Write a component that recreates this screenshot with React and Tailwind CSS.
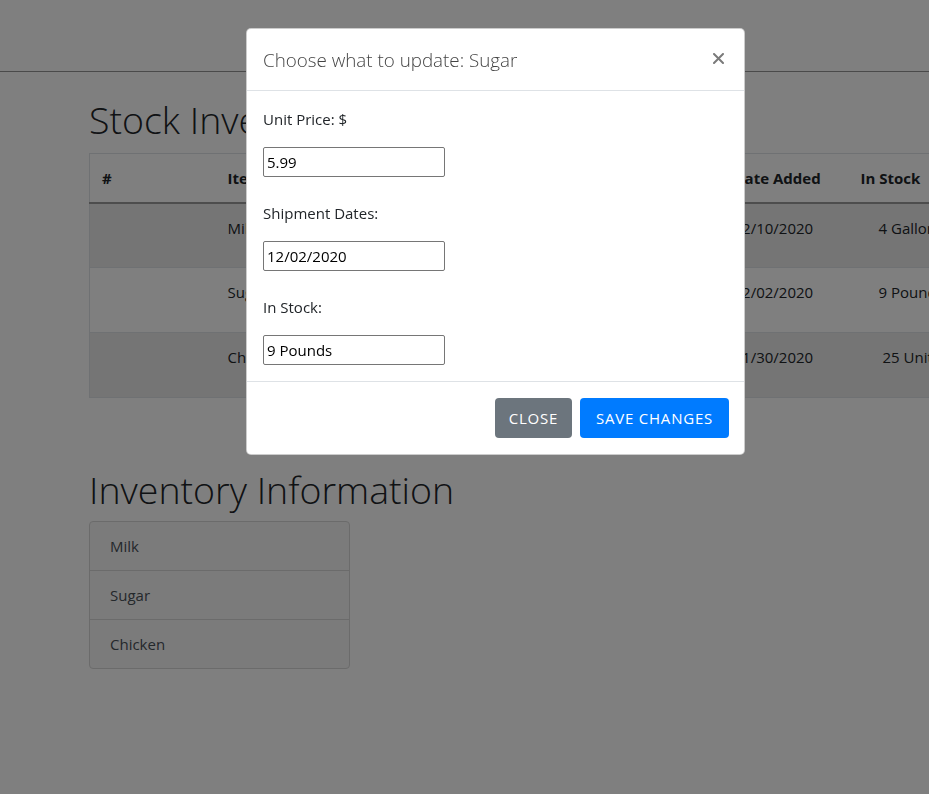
import React from "react";

function Cell({ children, className = "" }) {
  return <td className={"align-top px-3 pt-3 text-[15px] leading-6 text-[#212529] border-t border-[#dee2e6] " + className}>{children}</td>;
}

export default function App() {
  const rows = [
    { name: "Milk", date: "12/10/2020", stock: "4 Gallons", pad: "pl-[30px]", bg: "bg-[#ebebeb]" },
    { name: "Sugar", date: "12/02/2020", stock: "9 Pounds", pad: "pl-[30px]", bg: "bg-white" },
    { name: "Chicken", date: "11/30/2020", stock: "25 Units", pad: "pl-[34px]", bg: "bg-[#ebebeb]" },
  ];
  const th = "text-left align-top px-3 pt-3 font-bold text-[15px] leading-6 text-[#212529] border-b-2 border-[#9a9a9a] whitespace-nowrap";
  const inputCls = "mt-4 block w-[182px] h-[30px] border border-[#767676] rounded-[2px] px-[3px] text-[15px] text-black outline-none bg-white";
  return (
    <div className="relative w-[929px] h-[794px] overflow-hidden bg-white font-['Open_Sans',sans-serif]">
      <div className="h-[72px] border-b border-[#959595]" />
      <div className="pl-[89px]">
        <h1 className="mt-6 mb-[9px] h-[48px] text-[37.5px] leading-[48px] font-light text-[#212529] whitespace-nowrap">Stock Inventory</h1>
        <table className="w-[900px] border border-[#dee2e6] border-collapse">
          <thead>
            <tr className="h-[49px]">
              <th className={"w-[126px] " + th}>#</th>
              <th className={"w-[506px] " + th}>Item</th>
              <th className={"w-[127px] " + th}>Date Added</th>
              <th className={th}>In Stock</th>
            </tr>
          </thead>
          <tbody>
            {rows.map((r) => (
              <tr key={r.name} className={"h-[65px] " + r.bg}>
                <Cell></Cell>
                <Cell>{r.name}</Cell>
                <Cell>{r.date}</Cell>
                <Cell className={"whitespace-nowrap " + r.pad}>{r.stock}</Cell>
              </tr>
            ))}
          </tbody>
        </table>
        <h1 className="mt-[68px] mb-[7px] h-[48px] text-[37.5px] leading-[48px] font-light text-[#212529] whitespace-nowrap">Inventory Information</h1>
        <div className="w-[261px] border border-[#d6d6d6] rounded-[4px] bg-[#f7f7f7]">
          {["Milk", "Sugar", "Chicken"].map((n, i) => (
            <div key={n} className={"px-5 py-3 text-[15px] leading-6 text-[#495057] " + (i > 0 ? "border-t border-[#d6d6d6] h-[49px]" : "h-[48px]")}>{n}</div>
          ))}
        </div>
      </div>

      <div className="fixed inset-0 bg-[rgba(0,0,0,0.5)]" />

      <div className="absolute left-[246px] top-[28px] w-[499px] bg-white rounded-[5px] border border-black/20">
        <div className="h-[62px] flex items-center justify-between pl-4 pr-[20px] border-b border-[#dee2e6]">
          <div className="text-[18.8px] leading-[30px] font-light text-[#444]">Choose what to update: Sugar</div>
          <svg width="11" height="11" viewBox="0 0 11 11" className="-mt-[2px]">
            <path d="M1 1 L10 10 M10 1 L1 10" stroke="#7a7a7a" strokeWidth="2" strokeLinecap="round" />
          </svg>
        </div>
        <div className="p-4">
          <div className="text-[15px] leading-6 text-[#212529]">Unit Price: $</div>
          <input readOnly value="5.99" className={inputCls} />
          <div className="mt-6 text-[15px] leading-6 text-[#212529]">Shipment Dates:</div>
          <input readOnly value="12/02/2020" className={inputCls} />
          <div className="mt-6 text-[15px] leading-6 text-[#212529]">In Stock:</div>
          <input readOnly value="9 Pounds" className={inputCls} />
        </div>
        <div className="h-[73px] border-t border-[#dee2e6] flex items-center justify-end gap-2 pr-[15px]">
          <button className="h-[40px] w-[77px] rounded-[4px] bg-[#6c757d] text-white text-[15px] uppercase tracking-[0.8px]">Close</button>
          <button className="h-[40px] w-[149px] rounded-[4px] bg-[#007bff] text-white text-[15px] uppercase tracking-[0.8px]">Save Changes</button>
        </div>
      </div>
    </div>
  );
}
